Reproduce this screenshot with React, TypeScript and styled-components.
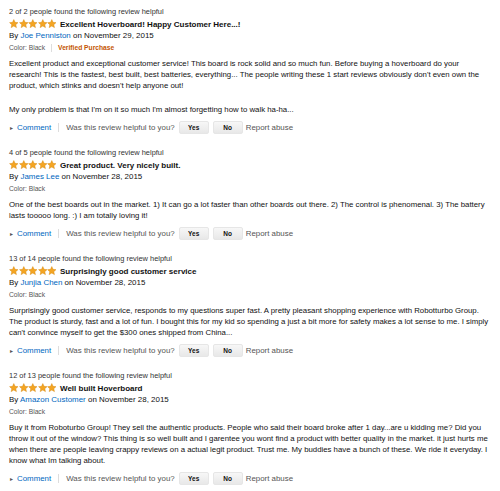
import React from "react";
import styled, { createGlobalStyle } from "styled-components";

const Global = createGlobalStyle`
  html, body { margin: 0; padding: 0; background: #fff; }
  body { font-family: "Liberation Sans", Arial, sans-serif; color: #111; }
`;

const Page = styled.div`
  width: 500px;
  height: 491px;
  overflow: hidden;
  padding: 6px 4px 0 9px;
  box-sizing: border-box;
  display: flex;
  flex-direction: column;
  gap: 13px;
`;

const Review = styled.div`
  display: flex;
  flex-direction: column;
`;

const Helpful = styled.div`
  font-size: 7.45px;
  line-height: 12px;
  color: #333;
`;

const TitleRow = styled.div`
  display: flex;
  align-items: center;
  gap: 3px;
  height: 12px;
`;

const Title = styled.span`
  font-size: 8px;
  font-weight: bold;
  color: #111;
`;

const ByLine = styled.div`
  font-size: 7.95px;
  line-height: 12px;
  color: #111;
`;

const Link = styled.span`
  color: #0066c0;
`;

const Meta = styled.div`
  display: flex;
  align-items: center;
  font-size: 6.7px;
  line-height: 12px;
  color: #555;
`;

const Divider = styled.span`
  display: inline-block;
  width: 1px;
  height: 8px;
  background: #ddd;
  margin: 0 6px;
`;

const Verified = styled.span`
  color: #c45500;
  font-weight: bold;
`;

const Body = styled.div`
  font-size: 7.8px;
  line-height: 11px;
  color: #111;
  margin-top: 4px;
  white-space: nowrap;
`;

const Gap = styled.div`
  height: 13px;
`;

const Actions = styled.div`
  display: flex;
  align-items: center;
  height: 14px;
  margin-top: 5px;
  font-size: 7.9px;
  color: #555;
`;

const Caret = styled.span`
  font-size: 6px;
  color: #555;
  margin: 0 4px 0 1px;
`;

const CommentLink = styled.span`
  color: #0066c0;
`;

const Sep = styled.span`
  display: inline-block;
  width: 1px;
  height: 9px;
  background: #ddd;
  margin: 0 7px;
`;

const Btn = styled.span`
  display: inline-flex;
  align-items: center;
  justify-content: center;
  width: 30px;
  height: 13px;
  margin-left: 4px;
  background: linear-gradient(#f7f7f7, #e8e8e8);
  border: 1px solid #e6e6e6;
  border-radius: 2px;
  box-sizing: border-box;
  font-size: 6.5px;
  font-weight: bold;
  color: #111;
`;

const Report = styled.span`
  margin-left: 3px;
`;

const Star = () => (
  <svg width="9.6" height="9.6" viewBox="0 0 24 24">
    <path
      d="M12 1.5l3.1 6.9 7.4.7-5.6 5 1.7 7.4L12 17.6 5.4 21.5l1.7-7.4-5.6-5 7.4-.7z"
      fill="#f4a523"
      stroke="#d8890e"
      strokeWidth="1.2"
      strokeLinejoin="round"
    />
  </svg>
);

const Stars = styled.span`
  display: inline-flex;
`;

type R = {
  helpful: string;
  title: string;
  author: string;
  date: string;
  verified?: boolean;
  paragraphs: string[][];
};

const reviews: R[] = [
  {
    helpful: "2 of 2 people found the following review helpful",
    title: "Excellent Hoverboard! Happy Customer Here...!",
    author: "Joe Penniston",
    date: "November 29, 2015",
    verified: true,
    paragraphs: [
      [
        "Excellent product and exceptional customer service! This board is rock solid and so much fun. Before buying a hoverboard do your",
        "research! This is the fastest, best built, best batteries, everything... The people writing these 1 start reviews obviously don't even own the",
        "product, which stinks and doesn't help anyone out!",
      ],
      ["My only problem is that I'm on it so much I'm almost forgetting how to walk ha-ha..."],
    ],
  },
  {
    helpful: "4 of 5 people found the following review helpful",
    title: "Great product. Very nicely built.",
    author: "James Lee",
    date: "November 28, 2015",
    paragraphs: [
      [
        "One of the best boards out in the market. 1) It can go a lot faster than other boards out there. 2) The control is phenomenal. 3) The battery",
        "lasts tooooo long. :) I am totally loving it!",
      ],
    ],
  },
  {
    helpful: "13 of 14 people found the following review helpful",
    title: "Surprisingly good customer service",
    author: "Junjia Chen",
    date: "November 28, 2015",
    paragraphs: [
      [
        "Surprisingly good customer service, responds to my questions super fast. A pretty pleasant shopping experience with Robotturbo Group.",
        "The product is sturdy, fast and a lot of fun. I bought this for my kid so spending a just a bit more for safety makes a lot sense to me. I simply",
        "can't convince myself to get the $300 ones shipped from China...",
      ],
    ],
  },
  {
    helpful: "12 of 13 people found the following review helpful",
    title: "Well built Hoverboard",
    author: "Amazon Customer",
    date: "November 28, 2015",
    paragraphs: [
      [
        "Buy it from Roboturbo Group! They sell the authentic products. People who said their board broke after 1 day...are u kidding me? Did you",
        "throw it out of the window? This thing is so well built and I garentee you wont find a product with better quality in the market. it just hurts me",
        "when there are people leaving crappy reviews on a actual legit product. Trust me. My buddies have a bunch of these. We ride it everyday. I",
        "know what Im talking about.",
      ],
    ],
  },
];

export default function App() {
  return (
    <>
      <Global />
      <Page>
        {reviews.map((r) => (
          <Review key={r.title}>
            <Helpful>{r.helpful}</Helpful>
            <TitleRow>
              <Stars>
                {[0, 1, 2, 3, 4].map((i) => (
                  <Star key={i} />
                ))}
              </Stars>
              <Title>{r.title}</Title>
            </TitleRow>
            <ByLine>
              By <Link>{r.author}</Link> on {r.date}
            </ByLine>
            <Meta>
              Color: Black
              {r.verified && (
                <>
                  <Divider />
                  <Verified>Verified Purchase</Verified>
                </>
              )}
            </Meta>
            <Body>
              {r.paragraphs.map((p, pi) => (
                <React.Fragment key={pi}>
                  {pi > 0 && <Gap />}
                  {p.map((line, li) => (
                    <div key={li}>{line}</div>
                  ))}
                </React.Fragment>
              ))}
            </Body>
            <Actions>
              <Caret>▸</Caret>
              <CommentLink>Comment</CommentLink>
              <Sep />
              Was this review helpful to you?
              <Btn>Yes</Btn>
              <Btn>No</Btn>
              <Report>Report abuse</Report>
            </Actions>
          </Review>
        ))}
      </Page>
    </>
  );
}
